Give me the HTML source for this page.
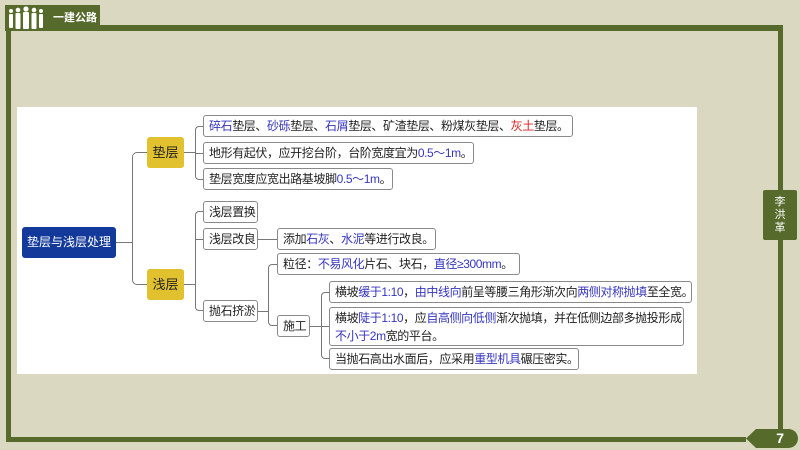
<!DOCTYPE html>
<html><head><meta charset="utf-8"><style>
*{margin:0;padding:0;box-sizing:border-box}
body{width:800px;height:450px;background:#dbd8c2;position:relative;overflow:hidden;font-family:"Liberation Sans","Noto Sans CJK SC",sans-serif}
.g{position:absolute;background:#566b2b}
.panel{position:absolute;left:17px;top:107px;width:680px;height:267px;background:#fff}
.b{position:absolute;border:1px solid #8a8a8a;border-radius:3px;background:#fff;font-size:12px;line-height:20px;padding:0 5px;color:#222;white-space:nowrap;letter-spacing:-0.4px}
.u{color:#3535c0}.r{color:#e02020}
.y{position:absolute;background:#e1c22e;border-radius:3px;font-size:13px;color:#222;text-align:center;line-height:31px;width:37px;height:31px}
.l{position:absolute;border-color:#777;border-style:solid;border-width:0}
</style></head><body>
<div class="g" style="left:6px;top:10px;width:5px;height:432px"></div>
<div class="g" style="left:6px;top:437px;width:740px;height:5px"></div>
<div class="g" style="left:100px;top:25px;width:683px;height:6px"></div>
<div class="g" style="left:778px;top:25px;width:5px;height:415px"></div>
<div class="g" style="left:5px;top:5px;width:95px;height:26px;color:#fff;font-size:11px;font-weight:bold;line-height:26px;padding-left:48px">一建公路</div>
<svg style="position:absolute;left:7px;top:6px" width="38" height="24" viewBox="0 0 38 24" fill="#fff">
<circle cx="4" cy="5" r="2"/><rect x="2" y="8" width="4" height="14" rx="1"/>
<circle cx="11" cy="4" r="2.3"/><rect x="8.5" y="7" width="5" height="16" rx="1"/>
<circle cx="19" cy="3" r="2.6"/><rect x="16" y="6" width="6" height="17" rx="1"/>
<circle cx="27" cy="4" r="2.3"/><rect x="24.5" y="7" width="5" height="16" rx="1"/>
<circle cx="34" cy="5" r="2"/><rect x="32" y="8" width="4" height="14" rx="1"/>
</svg>
<div class="g" style="left:763px;top:190px;width:34px;height:50px;border-radius:2px;color:#fff;font-size:11px;line-height:13px;text-align:center;padding-top:6px">李<br>洪<br>革</div>
<div class="g" style="left:746px;top:429px;width:52px;height:19px;border-radius:0 10px 10px 0;clip-path:polygon(10px 0,100% 0,100% 100%,10px 100%,0 50%);color:#fff;font-size:14px;font-weight:bold;text-align:right;padding-right:14px;line-height:19px">7</div>
<div class="panel"></div>
<div style="position:absolute;left:22px;top:227px;width:94px;height:31px;background:#133a9a;border-radius:3px;color:#fff;font-size:12px;line-height:31px;text-align:center">垫层与浅层处理</div>
<div class="l" style="left:116px;top:242px;width:16px;border-top-width:1px"></div>
<div class="l" style="left:132px;top:152px;width:15px;height:133px;border-width:1px 0 1px 1px;border-radius:5px 0 0 5px"></div>
<div class="y" style="left:147px;top:137px">垫层</div>
<div class="y" style="left:147px;top:269px">浅层</div>
<div class="l" style="left:184px;top:152px;width:11px;border-top-width:1px"></div>
<div class="l" style="left:195px;top:126px;width:8px;height:54px;border-width:1px 0 1px 1px;border-radius:4px 0 0 4px"></div>
<div class="l" style="left:195px;top:153px;width:8px;border-top-width:1px"></div>
<div class="l" style="left:184px;top:284px;width:11px;border-top-width:1px"></div>
<div class="l" style="left:195px;top:211px;width:8px;height:100px;border-width:1px 0 1px 1px;border-radius:4px 0 0 4px"></div>
<div class="l" style="left:195px;top:239px;width:8px;border-top-width:1px"></div>
<div class="b" style="left:203px;top:115px;width:370px"><span class="u">碎石</span>垫层、<span class="u">砂砾</span>垫层、<span class="u">石屑</span>垫层、矿渣垫层、粉煤灰垫层、<span class="r">灰土</span>垫层。</div>
<div class="b" style="left:203px;top:142px;width:271px">地形有起伏，应开挖台阶，台阶宽度宜为<span class="u">0.5～1m</span>。</div>
<div class="b" style="left:203px;top:168px;width:190px">垫层宽度应宽出路基坡脚<span class="u">0.5～1m</span>。</div>
<div class="b" style="left:203px;top:201px;width:55px">浅层置换</div>
<div class="b" style="left:203px;top:228px;width:55px">浅层改良</div>
<div class="l" style="left:258px;top:239px;width:19px;border-top-width:1px"></div>
<div class="b" style="left:277px;top:228px;width:159px">添加<span class="u">石灰</span>、<span class="u">水泥</span>等进行改良。</div>
<div class="b" style="left:203px;top:300px;width:55px">抛石挤淤</div>
<div class="l" style="left:258px;top:311px;width:10px;border-top-width:1px"></div>
<div class="l" style="left:268px;top:264px;width:9px;height:62px;border-width:1px 0 1px 1px;border-radius:4px 0 0 4px"></div>
<div class="b" style="left:277px;top:253px;width:243px">粒径：<span class="u">不易风化</span>片石、块石，<span class="u">直径≥300mm</span>。</div>
<div class="b" style="left:277px;top:315px;width:33px">施工</div>
<div class="l" style="left:310px;top:326px;width:11px;border-top-width:1px"></div>
<div class="l" style="left:321px;top:292px;width:8px;height:67px;border-width:1px 0 1px 1px;border-radius:4px 0 0 4px"></div>
<div class="l" style="left:321px;top:326px;width:8px;border-top-width:1px"></div>
<div class="b" style="left:329px;top:281px;width:363px">横坡<span class="u">缓于1:10</span>，<span class="u">由中线向</span>前呈等腰三角形渐次向<span class="u">两侧对称抛填</span>至全宽。</div>
<div class="b" style="left:329px;top:307px;width:355px;height:39px;line-height:18px;padding-top:1px">横坡<span class="u">陡于1:10</span>，应<span class="u">自高侧向低侧</span>渐次抛填，并在低侧边部多抛投形成<br><span class="u">不小于2m</span>宽的平台。</div>
<div class="b" style="left:329px;top:348px;width:250px">当抛石高出水面后，应采用<span class="u">重型机具</span>碾压密实。</div>
</body></html>
